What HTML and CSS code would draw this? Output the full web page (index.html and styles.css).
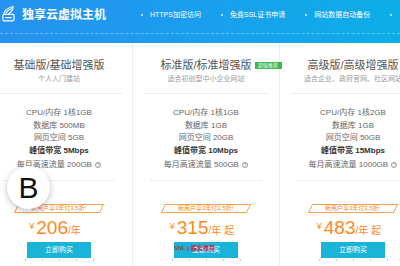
FILE: index.html
```html
<!DOCTYPE html>
<html lang="zh">
<head>
<meta charset="utf-8">
<title>独享云虚拟主机</title>
<link rel="stylesheet" href="styles.css">
</head>
<body>
<div class="page">
  <header class="hero">
    <div class="hero-bar">
      <div class="brand">
        <svg class="logo" viewBox="0 0 14 18" fill="none" stroke="#fff" stroke-width="1.3" stroke-linecap="round" stroke-linejoin="round">
          <path d="M2 9.5 Q2.5 4 12 1.5 Q12 6.5 7 9.5"/>
          <path d="M4.5 8 Q7 5 10 4"/>
          <rect x="1" y="10" width="12" height="7" rx="1.5"/>
          <path d="M4 13.5 H10"/>
        </svg>
        <span class="brand-name">独享云虚拟主机</span>
      </div>
      <ul class="features">
        <li>HTTPS加密访问</li>
        <li>免费SSL证书申请</li>
        <li>网站数据自动备份</li>
        <li></li>
      </ul>
    </div>
  </header>

  <main class="plans">
    <section class="plan">
      <h2 class="plan-title"><span>基础版/基础增强版</span></h2>
      <p class="plan-desc">个人入门建站</p>
      <div class="divider"></div>
      <ul class="specs">
        <li>CPU/内存 1核1GB</li>
        <li>数据库 500MB</li>
        <li>网页空间 5GB</li>
        <li class="strong">峰值带宽 5Mbps</li>
        <li class="last">每月高速流量 200GB <span class="help">?</span></li>
      </ul>
      <div class="dots"></div>
      <div class="promo"><span>新用户享3年付3.5折!</span></div>
      <div class="price"><span class="cur">¥</span><span class="num">206</span><span class="unit">/年</span></div>
      <a class="buy" href="#">立即购买</a>
      <div class="ticks"><i></i><i></i><i></i><i></i><i></i></div>
    </section>

    <section class="plan">
      <h2 class="plan-title"><span>标准版/标准增强版<em class="badge">超值推荐</em></span></h2>
      <p class="plan-desc">适合初创型中小企业网站</p>
      <div class="divider"></div>
      <ul class="specs">
        <li>CPU/内存 1核1GB</li>
        <li>数据库 1GB</li>
        <li>网页空间 20GB</li>
        <li class="strong">峰值带宽 10Mbps</li>
        <li class="last">每月高速流量 500GB <span class="help">?</span></li>
      </ul>
      <div class="dots"></div>
      <div class="promo"><span>新用户享3年付3.5折!</span></div>
      <div class="price"><span class="cur">¥</span><span class="num">315</span><span class="unit">/年</span><span class="from">起</span></div>
      <a class="buy" href="#">立即购买</a>
      <div class="ticks"><i></i><i></i><i></i><i></i><i></i></div>
    </section>

    <section class="plan">
      <h2 class="plan-title"><span>高级版/高级增强版</span></h2>
      <p class="plan-desc">适合企业、政府官网、社区网站</p>
      <div class="divider"></div>
      <ul class="specs">
        <li>CPU/内存 1核2GB</li>
        <li>数据库 1GB</li>
        <li>网页空间 50GB</li>
        <li class="strong">峰值带宽 15Mbps</li>
        <li class="last">每月高速流量 1000GB <span class="help">?</span></li>
      </ul>
      <div class="dots"></div>
      <div class="promo"><span>新用户享3年付3.5折!</span></div>
      <div class="price"><span class="cur">¥</span><span class="num">483</span><span class="unit">/年</span><span class="from">起</span></div>
      <a class="buy" href="#">立即购买</a>
      <div class="ticks"><i></i><i></i><i></i><i></i><i></i></div>
    </section>
  </main>

  <div class="avatar">B</div>
  <div class="watermark">SNL | 服务推荐</div>
</div>
</body>
</html>
```

FILE: styles.css
```css
* { box-sizing: border-box; margin: 0; padding: 0; }
html, body { width: 400px; height: 266px; overflow: hidden; background: #fff; }
body { font-family: "Liberation Sans", "Noto Sans CJK SC", sans-serif; color: #666; }

.page { position: relative; width: 400px; height: 266px; overflow: hidden; }

/* header */
.hero { height: 43px; background: linear-gradient(90deg, #2592ef 0%, #1a9fee 50%, #0caee7 100%); }
.hero-bar {
  height: 34px;
  padding: 0 0 3px 2px;
  border-bottom: 1px dashed rgba(255, 255, 255, 0.35);
  display: flex;
  align-items: center;
}
.brand { display: flex; align-items: center; gap: 7px; color: #fff; }
.logo { width: 13px; height: 17px; margin-top: -3px; }
.brand-name { font-size: 12px; font-weight: bold; line-height: 16px; letter-spacing: 0; }

.features { display: flex; list-style: none; gap: 20px; margin-left: 35px; color: #fff; font-size: 7px; line-height: 10px; }
.features li { display: flex; align-items: center; }
.features li::before {
  content: "";
  width: 2px;
  height: 2px;
  border-radius: 50%;
  background: rgba(255, 255, 255, 0.85);
  margin-right: 7px;
}

/* plans */
.plans { display: flex; margin-left: -14px; }
.plan {
  flex: 0 0 147px;
  height: 223px;
  border-right: 1px solid #eee;
  text-align: center;
  padding-top: 15px;
}
.plan-title { font-size: 11px; line-height: 14px; font-weight: normal; color: #555; }
.plan-title span { position: relative; }
.badge {
  position: absolute;
  left: 100%;
  top: 3px;
  margin-left: 3px;
  width: 27px;
  height: 7px;
  background: #3dba4e;
  color: #fff;
  font-style: normal;
  font-size: 5px;
  line-height: 7px;
  text-align: center;
  white-space: nowrap;
}
.plan-desc { margin-top: 2px; font-size: 7px; line-height: 10px; color: #999; }
.divider { margin: 9px 10px 0; border-top: 1px solid #eee; }

.specs { list-style: none; padding-top: 13px; font-size: 8px; line-height: 12.5px; color: #666; }
.specs .strong { font-weight: bold; color: #333; }
.specs .last { margin-top: 2px; }
.help {
  display: inline-block;
  width: 6px;
  height: 6px;
  border: 0.8px solid #999;
  border-radius: 50%;
  font-size: 5px;
  line-height: 5px;
  color: #999;
  text-align: center;
  vertical-align: 0;
  margin-left: 1px;
}

.dots { margin: 8px 17px 0; border-top: 1px dotted #e2e2e2; }

.promo {
  width: 86px;
  height: 9px;
  margin: 23px auto 0;
  border: 1px solid #f7a24a;
  transform: skewX(-25deg);
  display: flex;
  align-items: center;
  justify-content: center;
}
.promo span {
  transform: skewX(25deg);
  font-size: 6px;
  line-height: 7px;
  color: #f08a1c;
  white-space: nowrap;
}

.price { margin-top: 3px; height: 20px; line-height: 20px; color: #ff8a1c; padding-right: 8px; white-space: nowrap; }
.price .cur { font-size: 9px; vertical-align: 5px; margin-right: 2px; }
.price .num { font-size: 19px; }
.price .unit { font-size: 10px; }
.price .from { font-size: 10px; margin-left: 3px; }

.buy {
  display: block;
  width: 64px;
  height: 16px;
  margin: 6px auto 0;
  background: #1ab4d9;
  color: #fff;
  font-size: 7px;
  line-height: 16px;
  text-decoration: none;
}

.ticks { display: flex; justify-content: center; gap: 16px; margin-top: 1px; }
.ticks i { display: block; width: 1px; height: 2px; background: #ccc; }

/* overlays */
.avatar {
  position: absolute;
  left: 7px;
  top: 166px;
  width: 43px;
  height: 43px;
  border-radius: 50%;
  background: #fff;
  box-shadow: 0 2px 6px rgba(0, 0, 0, 0.25);
  color: #111;
  font-family: "Liberation Sans", sans-serif;
  font-size: 30px;
  line-height: 43px;
  text-align: center;
}
.watermark {
  position: absolute;
  left: 174px;
  top: 244px;
  font-size: 6px;
  line-height: 8px;
  font-weight: bold;
  color: #c42a40;
  white-space: nowrap;
}
```
